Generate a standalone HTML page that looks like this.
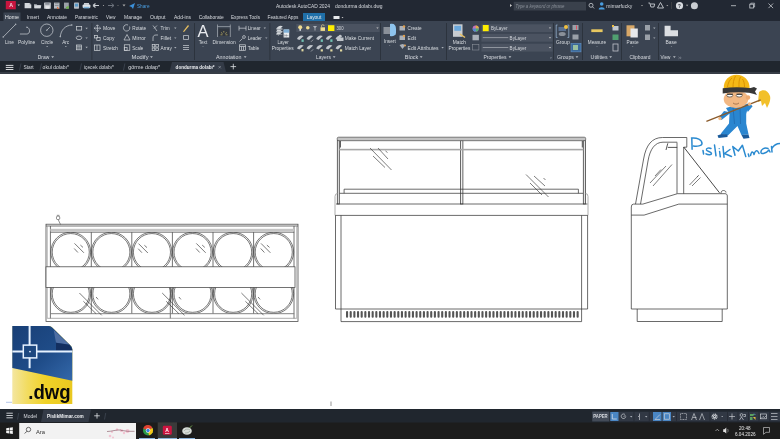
<!DOCTYPE html>
<html><head><meta charset="utf-8">
<style>
*{margin:0;padding:0}
html,body{width:780px;height:439px;overflow:hidden;background:#fff}
svg{display:block;font-family:"Liberation Sans",sans-serif;will-change:transform}

</style></head><body>
<svg width="780" height="439" viewBox="0 0 780 439">
<!-- bands -->
<rect x="0" y="0" width="780" height="21" fill="#222833"/>
<rect x="0" y="21" width="780" height="40" fill="#3b4452"/>
<rect x="0" y="61" width="780" height="11" fill="#20262e"/><rect x="0" y="72" width="780" height="2" fill="#373d46"/>
<rect x="0" y="409" width="780" height="14" fill="#20262e"/>
<rect x="0" y="422.5" width="780" height="16.5" fill="#1c1c1c"/>
<!-- title bar -->
<rect x="5.8" y="1" width="10" height="8.3" fill="#c8153f"/>
<text x="9.3" y="7" font-size="5.5" font-weight="bold" fill="#f4d0dc" textLength="3.8" lengthAdjust="spacingAndGlyphs">A</text>
<path d="M17.5 4.5h2.5l-1.25 1.5z" fill="#ccc"/>
<path d="M24.6 3.1h5l1.7 1.6v3.5h-6.7z" fill="#d4d8dd"/><path d="M29.6 3.1v1.6h1.7" fill="#9aa0a8"/>
<path d="M34 4.3h2.5l0.8 0.8h3.5v3.2h-6.8z" fill="#aeb3ba"/><path d="M34.8 5.6h6.6l-1 2.7h-5.6z" fill="#d4d8dd"/>
<rect x="44.1" y="2.6" width="6.7" height="6.1" fill="#c9cdd2"/><rect x="45.2" y="2.6" width="4.4" height="2.2" fill="#8a9099"/><rect x="45.5" y="6.2" width="4" height="2.5" fill="#e6e8eb"/>
<rect x="54" y="2.6" width="5.5" height="6" fill="#b8bdc4"/><rect x="54.8" y="3.5" width="3.8" height="0.6" fill="#6a7078"/><rect x="54.8" y="5" width="3.8" height="0.6" fill="#6a7078"/><path d="M57 6.5l2.5 2.2h-2.5z" fill="#e07040"/>
<rect x="64" y="2.6" width="4.8" height="6" fill="#9aa0a8"/><path d="M66 7l2.8-1.3v3h-2.8z" fill="#70b050"/>
<rect x="74" y="2.6" width="5" height="6.2" rx="0.7" fill="#b8bdc4"/><rect x="74.8" y="3.6" width="3.4" height="3" fill="#5a9ac8"/>
<rect x="84" y="3" width="5" height="1.8" fill="#c9cdd2"/><rect x="82.6" y="4.6" width="7.8" height="3.4" rx="1" fill="#dfe3e7"/><rect x="83.6" y="6.8" width="5.8" height="1.6" fill="#7ab0d8"/>
<path d="M93 5.5h6M93 5.5l2.5-2M93 5.5l2.5 2" stroke="#c9cdd2" stroke-width="1.2"/>
<circle cx="103.5" cy="5.5" r="0.6" fill="#aaa"/>
<path d="M108 5.5h6M114 5.5l-2.5-2M114 5.5l-2.5 2" stroke="#6c727c" stroke-width="1"/>
<circle cx="118" cy="5.5" r="0.6" fill="#777"/>
<path d="M122.5 4.5h3l-1.5 2z" fill="#aaa"/>
<path d="M129 6l6-3-2 6-1.5-2z" fill="#3b8fd9"/>
<text x="137" y="7.7" font-size="5.2" fill="#4a9de0" textLength="12.5" lengthAdjust="spacingAndGlyphs">Share</text>
<text x="276" y="7.5" font-size="5" fill="#d6d9de" textLength="54" lengthAdjust="spacingAndGlyphs">Autodesk AutoCAD 2024</text>
<text x="335" y="7.5" font-size="5" fill="#d6d9de" textLength="47.5" lengthAdjust="spacingAndGlyphs">dondurma dolabı.dwg</text>
<path d="M510 4l2 1.5-2 1.5z" fill="#ccc"/>
<rect x="513.7" y="1.8" width="72.3" height="8.7" fill="#3a414c"/>
<text x="515.5" y="7.8" font-size="4.8" font-style="italic" fill="#8a9099" textLength="49" lengthAdjust="spacingAndGlyphs">Type a keyword or phrase</text>
<circle cx="591" cy="5.3" r="2" fill="none" stroke="#c9cdd2" stroke-width="0.8"/>
<path d="M592.5 6.8l1.6 1.6" stroke="#c9cdd2" stroke-width="0.8"/>
<circle cx="601.7" cy="4" r="1.8" fill="#4a9de0"/>
<path d="M598.7 9.5c0-3 6-3 6 0z" fill="#4a9de0"/>
<text x="606.3" y="7.8" font-size="5" fill="#d6d9de" textLength="26" lengthAdjust="spacingAndGlyphs">mimarfucky</text>
<path d="M641 5h2l-1 1.2z" fill="#aaa"/>
<path d="M648.4 3h1.5l1 4h3l0.8-3h-4" stroke="#c9cdd2" stroke-width="0.9" fill="none"/>
<path d="M660.5 2.5l3 5.5h-6z" fill="none" stroke="#c9cdd2" stroke-width="0.9"/>
<path d="M666.3 5h2l-1 1.2z" fill="#aaa"/>
<rect x="671.5" y="2" width="0.5" height="7" fill="#555"/>
<circle cx="679.5" cy="5.7" r="3.6" fill="#d8dbe0"/>
<text x="678" y="7.6" font-size="4.5" font-weight="bold" fill="#232831">?</text>
<path d="M685.9 4.8h2.4l-1.2 1.4z" fill="#aaa"/>
<circle cx="694.4" cy="5.7" r="3.5" fill="#c9cdd2"/>
<path d="M731 5.7h5" stroke="#c9cdd2" stroke-width="0.8"/>
<rect x="749.8" y="4.2" width="3.8" height="3.8" fill="none" stroke="#c9cdd2" stroke-width="0.8"/>
<path d="M750.8 4.2v-1h3.8v3.8h-1" fill="none" stroke="#c9cdd2" stroke-width="0.7"/>
<path d="M768.5 3.5l4.6 4.6M773.1 3.5l-4.6 4.6" stroke="#c9cdd2" stroke-width="0.8"/>
<!-- tabs -->
<rect x="3.5" y="12.5" width="17" height="8.5" fill="#3b4452"/>
<g font-size="5" fill="#d8dbe0">
<text x="5" y="19.0" fill="#e6e8eb" textLength="14" lengthAdjust="spacingAndGlyphs">Home</text>
<text x="27" y="19.0" textLength="12" lengthAdjust="spacingAndGlyphs">Insert</text>
<text x="47" y="19.0" textLength="20" lengthAdjust="spacingAndGlyphs">Annotate</text>
<text x="75" y="19.0" textLength="23" lengthAdjust="spacingAndGlyphs">Parametric</text>
<text x="106" y="19.0" textLength="9.5" lengthAdjust="spacingAndGlyphs">View</text>
<text x="124" y="19.0" textLength="18" lengthAdjust="spacingAndGlyphs">Manage</text>
<text x="150" y="19.0" textLength="15.5" lengthAdjust="spacingAndGlyphs">Output</text>
<text x="174" y="19.0" textLength="17" lengthAdjust="spacingAndGlyphs">Add-ins</text>
<text x="198.7" y="19.0" textLength="25" lengthAdjust="spacingAndGlyphs">Collaborate</text>
<text x="231" y="19.0" textLength="29" lengthAdjust="spacingAndGlyphs">Express Tools</text>
<text x="267.5" y="19.0" textLength="31" lengthAdjust="spacingAndGlyphs">Featured Apps</text>
</g>
<rect x="303" y="13" width="22" height="8" fill="#1f6fa8"/>
<text x="306.8" y="19.0" font-size="5" fill="#e6e8eb" textLength="14.5" lengthAdjust="spacingAndGlyphs">Layout</text>
<rect x="333.5" y="16" width="6" height="3" fill="#e6e8eb"/>
<path d="M341.5 17h2l-1 1.2z" fill="#ccc"/>
<!-- ribbon separators -->
<g fill="#2a3039">
<rect x="91.5" y="23" width="0.8" height="37"/>
<rect x="194" y="23" width="0.8" height="37"/>
<rect x="269.5" y="23" width="0.8" height="37"/>
<rect x="380" y="23" width="0.8" height="37"/>
<rect x="446" y="23" width="0.8" height="37"/>
<rect x="553" y="23" width="0.8" height="37"/>
<rect x="582" y="23" width="0.8" height="37"/>
<rect x="621" y="23" width="0.8" height="37"/>
<rect x="658" y="23" width="0.8" height="37"/>

</g>
<g stroke="#cfd3d8" stroke-width="0.7" fill="none">
<!-- Draw -->
<path d="M3.2 37L15.6 24.4"/>
<path d="M19.9 34h7c3.5 0 3.5-6 0-6.8"/>
<circle cx="46.8" cy="30.2" r="6.2"/>
<path d="M46.8 30.2l3-3"/>
<path d="M60.3 36.6C61 30 65 25.5 71.8 25"/>
<rect x="76.5" y="26.5" width="5.2" height="3.6"/>
<ellipse cx="79" cy="37.8" rx="2.8" ry="1.8"/>
<rect x="76.5" y="45" width="5" height="4.8"/>
<path d="M76.5 46.5h5M76.5 48h5M78 45v4.8M79.8 45v4.8" stroke-width="0.4"/>
</g>
<g fill="#aab0b8">
<path d="M85.4 27.8h2.4l-1.2 1.4z"/><path d="M85.4 37.4h2.4l-1.2 1.4z"/><path d="M85.4 46.8h2.4l-1.2 1.4z"/>
<rect x="46.4" y="46.2" width="1.6" height="0.7"/><rect x="65" y="46.2" width="1.6" height="0.7"/><circle cx="3.2" cy="37" r="0.8"/><circle cx="15.6" cy="24.4" r="0.8"/><circle cx="60.3" cy="36.6" r="0.8"/><circle cx="71.8" cy="25" r="0.8"/><circle cx="26.9" cy="27.2" r="0.7"/><circle cx="46.8" cy="30.2" r="0.7"/>
</g>
<g font-size="5.2" fill="#d8dce0">
<text x="4.9" y="43.6" textLength="9" lengthAdjust="spacingAndGlyphs">Line</text>
<text x="18" y="43.6" textLength="17.3" lengthAdjust="spacingAndGlyphs">Polyline</text>
<text x="41" y="43.6" textLength="12.2" lengthAdjust="spacingAndGlyphs">Circle</text>
<text x="62.2" y="43.6" textLength="7" lengthAdjust="spacingAndGlyphs">Arc</text>
</g>
<!-- panel labels -->
<g font-size="5" fill="#d8dbe0">
<text x="37.8" y="59" textLength="11.5" lengthAdjust="spacingAndGlyphs">Draw</text>
<text x="131.6" y="59" textLength="17" lengthAdjust="spacingAndGlyphs">Modify</text>
<text x="216" y="59" textLength="25.5" lengthAdjust="spacingAndGlyphs">Annotation</text>
<text x="316" y="59" textLength="15" lengthAdjust="spacingAndGlyphs">Layers</text>
<text x="404.8" y="59" textLength="13.5" lengthAdjust="spacingAndGlyphs">Block</text>
<text x="483.5" y="59" textLength="23" lengthAdjust="spacingAndGlyphs">Properties</text>
<text x="556.9" y="59" textLength="17" lengthAdjust="spacingAndGlyphs">Groups</text>
<text x="590.6" y="59" textLength="17" lengthAdjust="spacingAndGlyphs">Utilities</text>
<text x="629.4" y="59" textLength="21" lengthAdjust="spacingAndGlyphs">Clipboard</text>
<text x="660.4" y="59" textLength="10" lengthAdjust="spacingAndGlyphs">View</text>
</g>
<g fill="#b8bdc4">
<path d="M51.25 56.3h2.8l-1.4 1.7z"/>
<path d="M150.05 56.3h2.8l-1.4 1.7z"/>
<path d="M243.75 56.3h2.8l-1.4 1.7z"/>
<path d="M332.75 56.3h2.8l-1.4 1.7z"/>
<path d="M419.75 56.3h2.8l-1.4 1.7z"/>
<path d="M508.55 56.3h2.8l-1.4 1.7z"/>
<path d="M575.55 56.3h2.8l-1.4 1.7z"/>
<path d="M609.25 56.3h2.8l-1.4 1.7z"/>
<path d="M672.95 56.3h2.8l-1.4 1.7z"/>
<path d="M678.5 56.8l1.2 1-1.2 1M680 56.8l1.2 1-1.2 1" stroke="#b8bdc4" stroke-width="0.4" fill="none"/>
<path d="M550 58.2l1.3 0v-1.3z"/>
</g>
<!-- Modify -->
<g stroke="#cfd3d8" stroke-width="0.7" fill="none">
<path d="M97.4 25v6.5M94.2 28.2h6.4M96.2 26l1.2-1.2 1.2 1.2M96.2 30.4l1.2 1.2 1.2-1.2M95.4 27l-1.2 1.2 1.2 1.2M99.4 27l1.2 1.2-1.2 1.2"/>
<rect x="94.5" y="35.5" width="3" height="2.5"/><rect x="96.8" y="37.5" width="3.3" height="3"/>
<rect x="94.5" y="45" width="5.5" height="5.5"/><path d="M97 45v5.5"/>
<path d="M129.5 26.5a3.2 3.2 0 1 1-1.5-1.5"/>
<path d="M127 34.5l3 5.5h-6z"/>
<rect x="124.3" y="44.8" width="5.5" height="5.5"/><rect x="124.3" y="47.5" width="2.8" height="2.8"/>
<path d="M153 25.5l4 5.5M157 25.5l-3 3"/>
<path d="M153 41v-3c0-2 1-3 3-3h2"/>
<rect x="152.2" y="44.5" width="2.6" height="2.5"/><rect x="155.8" y="44.5" width="2.6" height="2.5"/><rect x="152.2" y="48" width="2.6" height="2.5"/><rect x="155.8" y="48" width="2.6" height="2.5"/>
<path d="M183.5 39.5h5v-4h-5z"/>
<path d="M183 45.5h6M183 47.5h6M183 49.5h6"/>
</g>
<path d="M183 31.5l5-6.5 1 1-5 6z" fill="#e8c060"/>
<g font-size="5.2" fill="#d8dce0">
<text x="103" y="30" textLength="12.4" lengthAdjust="spacingAndGlyphs">Move</text>
<text x="103" y="39.8" textLength="11.6" lengthAdjust="spacingAndGlyphs">Copy</text>
<text x="103" y="49.5" textLength="15" lengthAdjust="spacingAndGlyphs">Stretch</text>
<text x="132.3" y="30" textLength="13.8" lengthAdjust="spacingAndGlyphs">Rotate</text>
<text x="132.3" y="39.8" textLength="13.4" lengthAdjust="spacingAndGlyphs">Mirror</text>
<text x="132.3" y="49.5" textLength="11" lengthAdjust="spacingAndGlyphs">Scale</text>
<text x="160.5" y="30" textLength="9.2" lengthAdjust="spacingAndGlyphs">Trim</text>
<text x="160.5" y="39.8" textLength="10.6" lengthAdjust="spacingAndGlyphs">Fillet</text>
<text x="160.5" y="49.5" textLength="11.3" lengthAdjust="spacingAndGlyphs">Array</text>
</g>
<g fill="#aab0b8">
<path d="M174.1 27.6h2.4l-1.2 1.4z"/><path d="M174.1 37.4h2.4l-1.2 1.4z"/><path d="M174.1 47.0h2.4l-1.2 1.4z"/>
</g>
<!-- Annotation -->
<text x="197.5" y="37" font-size="16" fill="#e8eaee" textLength="11" lengthAdjust="spacingAndGlyphs">A</text>
<text x="198.7" y="44.1" font-size="5.2" fill="#d8dce0" textLength="8.5" lengthAdjust="spacingAndGlyphs">Text</text>
<circle cx="203" cy="46.5" r="0.45" fill="#aab0b8"/>
<g stroke="#cfd3d8" stroke-width="0.7" fill="none">
<path d="M217.5 24.5v12.5M230.3 24.5v12.5M217.5 26.6h12.8" stroke="#aab0b8"/>
<path d="M239 25.8v4.8M246 25.8v4.8M239 28.2h7"/>
<path d="M239.5 41.5l3-3"/><circle cx="244" cy="37" r="1.4"/>
<rect x="239.5" y="44.8" width="6" height="5.5"/><path d="M239.5 46.5h6M241.5 46.5v3.8M243.5 46.5v3.8"/>
</g>
<rect x="218.6" y="28.5" width="10.8" height="7.5" fill="#30363f"/><path d="M221 32.5l1.5 1M223.8 31v1.5M226.8 32.5l-1.5 1M220.5 34.8h2M225.5 34.8h2" stroke="#e0d070" stroke-width="0.6"/>
<g font-size="5.2" fill="#d8dce0">
<text x="212.6" y="44.1" textLength="23.2" lengthAdjust="spacingAndGlyphs">Dimension</text>
<text x="247.8" y="30" textLength="12.7" lengthAdjust="spacingAndGlyphs">Linear</text>
<text x="247.8" y="39.8" textLength="14" lengthAdjust="spacingAndGlyphs">Leader</text>
<text x="247.8" y="49.5" textLength="11.3" lengthAdjust="spacingAndGlyphs">Table</text>
</g>
<g fill="#aab0b8"><path d="M263.6 27.6h2.4l-1.2 1.4z"/><path d="M265.1 37.4h2.4l-1.2 1.4z"/></g>
<!-- Layers -->
<g fill="#d4d8dc">
<path d="M276.2 29.1C277.2 26.3 280.2 24.8 282.8 26.2L278.6 30.2z"/>
<path d="M276.2 31.7C277.2 28.9 280.2 27.4 282.8 28.8L278.6 32.8z"/>
<path d="M276.2 34.3C277.2 31.5 280.2 30.0 282.8 31.4L278.6 35.4z"/>
</g>
<g fill="#8a9099"><path d="M276.2 28.8L282.4 29.1v0.8l-6.2-0.3z"/><path d="M276.2 31.4L282.4 31.7v0.8l-6.2-0.3z"/><path d="M276.2 34L282.4 34.3v0.8l-6.2-0.3z"/></g>
<rect x="283.6" y="29.5" width="5.6" height="8" fill="#e8ecef"/>
<rect x="283.6" y="29.5" width="5.6" height="3.2" fill="#7fb0d8"/>
<path d="M284.8 34.2v2.5M286.4 34.2v2.5M284.5 35.5h4" stroke="#6a7078" stroke-width="0.4"/>
<g font-size="5.2" fill="#d8dce0">
<text x="277.4" y="44" textLength="11.3" lengthAdjust="spacingAndGlyphs">Layer</text>
<text x="271.8" y="49.7" textLength="21.9" lengthAdjust="spacingAndGlyphs">Properties</text>
</g>
<rect x="296.3" y="24" width="83.3" height="8" fill="#4b5361"/>
<g fill="#f0dc90"><circle cx="300.2" cy="27.3" r="2"/><circle cx="307.8" cy="27.7" r="1.8"/><rect x="320.5" y="27.3" width="4.5" height="3.6"/></g><rect x="299.4" y="29" width="1.6" height="1.8" fill="#d8dce0"/><path d="M321.5 27.3v-1.3a1.3 1.3 0 0 1 2.6 0" stroke="#f0dc90" stroke-width="0.6" fill="none"/>
<path d="M313 26h4l-1.5 2v2.5h-1v-2.5z" fill="#aab0b8"/>
<rect x="328" y="25.2" width="6.4" height="5.8" fill="#ffee00"/>
<text x="336.5" y="30.3" font-size="5" fill="#d6d9de" textLength="7.1" lengthAdjust="spacingAndGlyphs">300</text>
<path d="M376.3 27.4h2.4l-1.2 1.4z" fill="#ccc"/>
<g fill="#c0c5cb"><path d="M297.0 38.9C298.0 36.1 301.0 34.6 303.6 36.0L299.4 40.0z"/><path d="M306.6 38.9C307.6 36.1 310.6 34.6 313.2 36.0L309.0 40.0z"/><path d="M316.2 38.9C317.2 36.1 320.2 34.6 322.8 36.0L318.6 40.0z"/><path d="M325.8 38.9C326.8 36.1 329.8 34.6 332.4 36.0L328.2 40.0z"/><path d="M335.6 38.9C336.6 36.1 339.6 34.6 342.2 36.0L338.0 40.0z"/><path d="M297.0 48.5C298.0 45.7 301.0 44.2 303.6 45.6L299.4 49.6z"/><path d="M306.6 48.5C307.6 45.7 310.6 44.2 313.2 45.6L309.0 49.6z"/><path d="M316.2 48.5C317.2 45.7 320.2 44.2 322.8 45.6L318.6 49.6z"/><path d="M325.8 48.5C326.8 45.7 329.8 44.2 332.4 45.6L328.2 49.6z"/><path d="M335.6 48.5C336.6 45.7 339.6 44.2 342.2 45.6L338.0 49.6z"/></g><g fill="#70bfb2"><rect x="301.5" y="39.3" width="2.2" height="2.6"/><rect x="320.7" y="39.3" width="2.2" height="2.6"/><rect x="330.3" y="39.3" width="2.2" height="2.6"/></g><path d="M311 41.8l2.2-2.2M340 41l2-1.5" stroke="#d0d4d8" stroke-width="0.6"/><rect x="337" y="37.5" width="6.5" height="3.5" fill="#c0c5cb"/><circle cx="340.2" cy="36" r="1.3" fill="#c0c5cb"/><g fill="#e0d8a0"><rect x="301.5" y="49" width="2" height="2.4"/><rect x="320.7" y="49.3" width="2.2" height="2.2"/><rect x="330.3" y="49.3" width="2.2" height="2.2"/><rect x="340" y="49.3" width="2.2" height="2.2"/></g><path d="M311 51.5l2.2-2.2" stroke="#d0d4d8" stroke-width="0.6"/>
<g font-size="5.2" fill="#d8dce0">
<text x="344.7" y="39.8" textLength="29.3" lengthAdjust="spacingAndGlyphs">Make Current</text>
<text x="344.7" y="49.5" textLength="26.5" lengthAdjust="spacingAndGlyphs">Match Layer</text>
</g>
<!-- Block -->
<rect x="383.5" y="27" width="8.5" height="7" fill="#8a9099"/>
<path d="M390 24c4-1 6 1 6 5v4c0 2-3 4-6 3z" fill="#8ec4ee"/>
<text x="383.8" y="43" font-size="5.2" fill="#d8dce0" textLength="12" lengthAdjust="spacingAndGlyphs">Insert</text>
<circle cx="389.8" cy="45.5" r="0.45" fill="#aab0b8"/>
<g fill="#aab0b8">
<rect x="399.5" y="26" width="5.5" height="4.5"/><rect x="399.5" y="35.5" width="5.5" height="4.5"/>
<path d="M399.5 45l3 4 3-4-3-1z"/>
</g>
<g fill="#e0a050"><circle cx="404" cy="26.5" r="1.2"/><circle cx="404" cy="36" r="1.2"/><circle cx="405" cy="45.5" r="1"/></g>
<g font-size="5.2" fill="#d8dce0">
<text x="407.6" y="30" textLength="14" lengthAdjust="spacingAndGlyphs">Create</text>
<text x="407.6" y="39.8" textLength="8.5" lengthAdjust="spacingAndGlyphs">Edit</text>
<text x="407.6" y="49.5" textLength="31" lengthAdjust="spacingAndGlyphs">Edit Attributes</text>
</g>
<path d="M441.4 47.0h2.4l-1.2 1.4z" fill="#aab0b8"/>
<!-- Properties -->
<rect x="453" y="24.3" width="9.5" height="12.5" fill="#c9cdd2"/>
<rect x="454.3" y="25.8" width="6.8" height="5" fill="#6aa8dc"/>
<path d="M460 34l5 3.5" stroke="#e8c060" stroke-width="1.5"/>
<g font-size="5.2" fill="#d8dce0">
<text x="452.8" y="44" textLength="13.2" lengthAdjust="spacingAndGlyphs">Match</text>
<text x="448.5" y="49.7" textLength="21.9" lengthAdjust="spacingAndGlyphs">Properties</text>
</g>
<circle cx="475.7" cy="28.5" r="3.1" fill="#c070c0"/>
<path d="M475.7 28.5v-3.1a3.1 3.1 0 0 1 3.1 3.1z" fill="#e0b040"/>
<path d="M475.7 28.5h3.1a3.1 3.1 0 0 1-3.1 3.1z" fill="#50b070"/>
<path d="M475.7 28.5v3.1a3.1 3.1 0 0 1-3.1-3.1z" fill="#4a8fd0"/>
<rect x="472.5" y="34.8" width="6.4" height="5.5" fill="#aab0b8"/>
<rect x="472.5" y="44.5" width="6.4" height="5.5" fill="none" stroke="#8a9099" stroke-width="0.6"/>
<g fill="#4b5361">
<rect x="481.4" y="24.3" width="71.2" height="7.8"/>
<rect x="481.4" y="33.8" width="71.2" height="7.9"/>
<rect x="481.4" y="43.7" width="71.2" height="7.9"/>
</g>
<rect x="482.8" y="25" width="5.9" height="6.2" fill="#ffee00"/>
<path d="M482.8 37.6h25.5M482.8 47.5h25.5" stroke="#d4d8dd" stroke-width="0.5"/>
<g font-size="5" fill="#d6d9de">
<text x="491" y="30.2" textLength="16.5" lengthAdjust="spacingAndGlyphs">ByLayer</text>
<text x="509.6" y="39.8" textLength="16.7" lengthAdjust="spacingAndGlyphs">ByLayer</text>
<text x="509.6" y="49.6" textLength="16.7" lengthAdjust="spacingAndGlyphs">ByLayer</text>
</g>
<g fill="#ccc"><path d="M548.8 27.4h2.4l-1.2 1.4z"/><path d="M548.8 37.2h2.4l-1.2 1.4z"/><path d="M548.8 46.9h2.4l-1.2 1.4z"/></g>
<!-- Groups -->
<path d="M557.5 25h-1.3v12.5h1.3M567.5 25h1.3v12.5h-1.3" stroke="#a0c0e0" stroke-width="0.7" fill="none"/>
<rect x="558.5" y="27" width="7.5" height="4" fill="#5a7090"/>
<ellipse cx="562.2" cy="34" rx="3.5" ry="2" fill="#8a9099"/>
<circle cx="566" cy="27" r="2" fill="#f0c040"/>
<text x="556" y="44" font-size="5.2" fill="#d8dce0" textLength="13.6" lengthAdjust="spacingAndGlyphs">Group</text>
<rect x="572.5" y="25" width="6" height="5" fill="#9aa0a8"/><rect x="576" y="25.5" width="1" height="4" fill="#e05060"/>
<rect x="572.5" y="34.5" width="6" height="5" fill="#9aa0a8"/>
<rect x="571" y="43.4" width="10" height="8.5" fill="#3c6a9a" stroke="#6a9ad0" stroke-width="0.5"/>
<rect x="573" y="45" width="5" height="5" fill="#9ac0a0"/>
<!-- Utilities -->
<rect x="591.3" y="29.3" width="11.3" height="2.8" fill="#e8c860"/>
<text x="587.8" y="44" font-size="5.2" fill="#d8dce0" textLength="18.2" lengthAdjust="spacingAndGlyphs">Measure</text>
<circle cx="597" cy="46.5" r="0.45" fill="#aab0b8"/>
<rect x="612.5" y="26" width="6" height="4.5" fill="#c0c8d0"/><rect x="612" y="25" width="2" height="2" fill="#f0c040"/>
<rect x="612.5" y="34.5" width="6" height="5.5" fill="#50a070"/>
<rect x="613" y="44" width="5" height="7" fill="none" stroke="#c0c4ca" stroke-width="0.8"/>
<!-- Clipboard -->
<rect x="626.5" y="25.3" width="8" height="11" fill="#d8a868"/>
<rect x="630.5" y="28.5" width="7.3" height="9" fill="#e6e8eb"/>
<text x="626.5" y="44" font-size="5.2" fill="#d8dce0" textLength="12" lengthAdjust="spacingAndGlyphs">Paste</text>
<circle cx="632.8" cy="46.5" r="0.45" fill="#aab0b8"/>
<rect x="645" y="25" width="5" height="5.5" fill="#9aa0a8"/>
<rect x="645" y="34.5" width="5" height="5.5" fill="#9aa0a8"/>
<g fill="#aab0b8"><path d="M653.1 27.6h2.4l-1.2 1.4z"/><path d="M653.1 37.4h2.4l-1.2 1.4z"/></g>
<!-- View -->
<path d="M664.6 25.8h6v4.5h7.4v6h-13.4z" fill="#dcdfe3"/>
<text x="665.5" y="44" font-size="5.2" fill="#d8dce0" textLength="11.3" lengthAdjust="spacingAndGlyphs">Base</text>
<circle cx="671.3" cy="46.5" r="0.45" fill="#aab0b8"/>
<!-- file tabs -->
<path d="M6.2 65.4h6.8M6.2 67.45h6.8M6.2 69.5h6.8" stroke="#eceef0" stroke-width="0.9" stroke-linecap="round"/>
<g stroke="#4a5260" stroke-width="0.6">
<path d="M19.5 70.5l1.5-7M40 70.5l1.5-7M80 70.5l1.5-7M123.4 70.5l1.5-7"/>
</g>
<path d="M169.5 72l2.5-10h51.5l2.5 10z" fill="#333a46"/>
<g font-size="5" fill="#d8dbe0">
<text x="23.4" y="69" textLength="10.3" lengthAdjust="spacingAndGlyphs">Start</text>
<text x="42.6" y="69" textLength="26.3" lengthAdjust="spacingAndGlyphs">okul dolabı*</text>
<text x="84" y="69" textLength="29.8" lengthAdjust="spacingAndGlyphs">içecek dolabı*</text>
<text x="128.2" y="69" textLength="32" lengthAdjust="spacingAndGlyphs">görme dolap*</text>
<text x="175.6" y="69" fill="#eceef1" font-weight="bold" textLength="39" lengthAdjust="spacingAndGlyphs">dondurma dolabı*</text>
</g>
<path d="M218.5 66l2.4 2.4M220.9 66l-2.4 2.4" stroke="#aab0b8" stroke-width="0.5"/>
<path d="M233.3 63.8v5.6M230.5 66.6h5.6" stroke="#e0e3e7" stroke-width="0.8"/>
<!-- LEFT DRAWING -->
<g stroke="#252525" stroke-width="0.62" fill="none"><circle cx="70.75" cy="252.1" r="19.9"/><circle cx="70.75" cy="252.1" r="18.55"/><circle cx="111.35" cy="252.1" r="19.9"/><circle cx="111.35" cy="252.1" r="18.55"/><circle cx="151.95" cy="252.1" r="19.9"/><circle cx="151.95" cy="252.1" r="18.55"/><circle cx="192.55" cy="252.1" r="19.9"/><circle cx="192.55" cy="252.1" r="18.55"/><circle cx="233.15" cy="252.1" r="19.9"/><circle cx="233.15" cy="252.1" r="18.55"/><circle cx="273.75" cy="252.1" r="19.9"/><circle cx="273.75" cy="252.1" r="18.55"/><circle cx="70.75" cy="293.8" r="19.9"/><circle cx="70.75" cy="293.8" r="18.55"/><circle cx="111.35" cy="293.8" r="19.9"/><circle cx="111.35" cy="293.8" r="18.55"/><circle cx="151.95" cy="293.8" r="19.9"/><circle cx="151.95" cy="293.8" r="18.55"/><circle cx="192.55" cy="293.8" r="19.9"/><circle cx="192.55" cy="293.8" r="18.55"/><circle cx="233.15" cy="293.8" r="19.9"/><circle cx="233.15" cy="293.8" r="18.55"/><circle cx="273.75" cy="293.8" r="19.9"/><circle cx="273.75" cy="293.8" r="18.55"/></g>
<rect x="50.8" y="224" width="243" height="8" fill="#fff"/>
<rect x="50.8" y="313.8" width="243" height="5" fill="#fff"/>
<g stroke="#444" stroke-width="0.75" fill="none">
<rect x="46" y="224.2" width="252" height="97.3"/>
<path d="M46 226H298M50.4 232.2H294.2"/>
<path d="M50.4 226V318.5M294 226V318.5"/>
<path d="M91.3 232.2V313.6M131.8 232.2V313.6M172.4 232.2V313.6M213 232.2V313.6M253.6 232.2V313.6"/>
<path d="M170.3 287.4V318.5"/>
</g>
<path d="M47.4 226V318.5M296.6 226V318.5" stroke="#999" stroke-width="0.6"/><path d="M50.4 313.7H294.2" stroke="#777" stroke-width="0.9"/><path d="M47.4 318.3H296.6" stroke="#888" stroke-width="0.7"/>
<rect x="50.4" y="228.8" width="243.6" height="2.7" fill="#c4c4c4"/>
<rect x="46" y="266.8" width="249" height="20.6" fill="#fff" stroke="#444" stroke-width="0.75"/>
<g stroke="#333" stroke-width="0.65"><path d="M74.5 243.4l9.4 9.4M74.2 248.5l3.7 4M80.4 245.1l2.6 2.3M138.5 243.6l9.4 9.4M138.2 248.7l3.7 4M144.4 245.3l2.6 2.3M196.3 243.4l9.4 9.4M196.0 248.5l3.7 4M202.2 245.1l2.6 2.3M261 243.4l9.4 9.4M260.7 248.5l3.7 4M266.9 245.1l2.6 2.3"/><path d="M79.4 293L101.7 315.3M83.4 301.3L96.1 313.7M96.1 297l2 2.4M162.2 293L184.5 315.3M166.2 301.3L178.9 313.7M178.9 297l2 2.4M241.4 293L263.7 315.3M245.4 301.3L258.1 313.7M258.1 297l2 2.4"/></g>
<path d="M60.5 224.5L58.2 219.6" stroke="#444" stroke-width="0.6"/><rect x="56.5" y="216.2" width="3.2" height="3.3" rx="1" fill="none" stroke="#555" stroke-width="0.7"/><rect x="56.8" y="214.8" width="2.6" height="1.2" fill="#999"/>
<!-- MIDDLE DRAWING -->
<g stroke="#383838" stroke-width="0.75" fill="none">
<rect x="337.3" y="140.5" width="2" height="63.5" fill="#e4e4e4"/>
<rect x="583.3" y="140.5" width="2.3" height="63.5" fill="#e4e4e4"/>
<rect x="460.6" y="140.5" width="2.3" height="63.5" fill="#f0f0f0"/>
<rect x="337.2" y="137.2" width="248.5" height="3.5" rx="1.4" fill="#c4c4c4" stroke="#555"/>
<path d="M340.4 141V147.5M582.3 141V147.5" stroke-width="0.9"/>
</g>
<rect x="339.3" y="148.8" width="244" height="1.6" fill="#a8a8a8"/>
<g stroke="#383838" stroke-width="0.75" fill="none">
<path d="M344.1 193.3V189.2H578.4V193.3M339.6 193.3H583"/>
<path d="M336 204H587.5M335 215.4H588"/>


<path d="M335.5 215.4V309M341 215.4V321.6M581.6 215.4V321.6M587.6 215.4V309"/>
<path d="M335.5 309H587.6M341 321.6H581.6"/>
</g>
<g stroke="#383838" stroke-width="0.65">
<path d="M370 148l21.5 22M373 156l12 11.5M378 148l10 11M385.5 151l2 1.5"/>
<path d="M526 174.5l22.5 22.5M530 183l12 12M534 176l11 10M543.5 178l2 2"/>
</g>
<g fill="#555"><rect x="346.00" y="311" width="2.1" height="6.8" rx="1"/><rect x="349.66" y="311" width="2.1" height="6.8" rx="1"/><rect x="353.32" y="311" width="2.1" height="6.8" rx="1"/><rect x="356.98" y="311" width="2.1" height="6.8" rx="1"/><rect x="360.64" y="311" width="2.1" height="6.8" rx="1"/><rect x="364.30" y="311" width="2.1" height="6.8" rx="1"/><rect x="367.96" y="311" width="2.1" height="6.8" rx="1"/><rect x="371.62" y="311" width="2.1" height="6.8" rx="1"/><rect x="375.28" y="311" width="2.1" height="6.8" rx="1"/><rect x="378.94" y="311" width="2.1" height="6.8" rx="1"/><rect x="382.60" y="311" width="2.1" height="6.8" rx="1"/><rect x="386.26" y="311" width="2.1" height="6.8" rx="1"/><rect x="389.92" y="311" width="2.1" height="6.8" rx="1"/><rect x="393.58" y="311" width="2.1" height="6.8" rx="1"/><rect x="397.24" y="311" width="2.1" height="6.8" rx="1"/><rect x="400.90" y="311" width="2.1" height="6.8" rx="1"/><rect x="404.56" y="311" width="2.1" height="6.8" rx="1"/><rect x="408.22" y="311" width="2.1" height="6.8" rx="1"/><rect x="411.88" y="311" width="2.1" height="6.8" rx="1"/><rect x="415.54" y="311" width="2.1" height="6.8" rx="1"/><rect x="419.20" y="311" width="2.1" height="6.8" rx="1"/><rect x="422.86" y="311" width="2.1" height="6.8" rx="1"/><rect x="426.52" y="311" width="2.1" height="6.8" rx="1"/><rect x="430.18" y="311" width="2.1" height="6.8" rx="1"/><rect x="433.84" y="311" width="2.1" height="6.8" rx="1"/><rect x="437.50" y="311" width="2.1" height="6.8" rx="1"/><rect x="441.16" y="311" width="2.1" height="6.8" rx="1"/><rect x="444.82" y="311" width="2.1" height="6.8" rx="1"/><rect x="448.48" y="311" width="2.1" height="6.8" rx="1"/><rect x="452.14" y="311" width="2.1" height="6.8" rx="1"/><rect x="455.80" y="311" width="2.1" height="6.8" rx="1"/><rect x="459.46" y="311" width="2.1" height="6.8" rx="1"/><rect x="463.12" y="311" width="2.1" height="6.8" rx="1"/><rect x="466.78" y="311" width="2.1" height="6.8" rx="1"/><rect x="470.44" y="311" width="2.1" height="6.8" rx="1"/><rect x="474.10" y="311" width="2.1" height="6.8" rx="1"/><rect x="477.76" y="311" width="2.1" height="6.8" rx="1"/><rect x="481.42" y="311" width="2.1" height="6.8" rx="1"/><rect x="485.08" y="311" width="2.1" height="6.8" rx="1"/><rect x="488.74" y="311" width="2.1" height="6.8" rx="1"/><rect x="492.40" y="311" width="2.1" height="6.8" rx="1"/><rect x="496.06" y="311" width="2.1" height="6.8" rx="1"/><rect x="499.72" y="311" width="2.1" height="6.8" rx="1"/><rect x="503.38" y="311" width="2.1" height="6.8" rx="1"/><rect x="507.04" y="311" width="2.1" height="6.8" rx="1"/><rect x="510.70" y="311" width="2.1" height="6.8" rx="1"/><rect x="514.36" y="311" width="2.1" height="6.8" rx="1"/><rect x="518.02" y="311" width="2.1" height="6.8" rx="1"/><rect x="521.68" y="311" width="2.1" height="6.8" rx="1"/><rect x="525.34" y="311" width="2.1" height="6.8" rx="1"/><rect x="529.00" y="311" width="2.1" height="6.8" rx="1"/><rect x="532.66" y="311" width="2.1" height="6.8" rx="1"/><rect x="536.32" y="311" width="2.1" height="6.8" rx="1"/><rect x="539.98" y="311" width="2.1" height="6.8" rx="1"/><rect x="543.64" y="311" width="2.1" height="6.8" rx="1"/><rect x="547.30" y="311" width="2.1" height="6.8" rx="1"/><rect x="550.96" y="311" width="2.1" height="6.8" rx="1"/><rect x="554.62" y="311" width="2.1" height="6.8" rx="1"/><rect x="558.28" y="311" width="2.1" height="6.8" rx="1"/><rect x="561.94" y="311" width="2.1" height="6.8" rx="1"/><rect x="565.60" y="311" width="2.1" height="6.8" rx="1"/><rect x="569.26" y="311" width="2.1" height="6.8" rx="1"/><rect x="572.92" y="311" width="2.1" height="6.8" rx="1"/><rect x="576.58" y="311" width="2.1" height="6.8" rx="1"/></g>
<!-- RIGHT DRAWING (side) -->
<g stroke="#383838" stroke-width="0.75" fill="none">
<path d="M635.5 204.1L643.6 159C646 145 652 137.5 662.5 137.5H686.8V147.2H683.7"/>
<path d="M640.5 204.1L648 161C650 149 655 142.2 663 142.2H677.2"/>
<path d="M677 142.5V193.7M683.7 147V193.7"/>
<path d="M666 150L667.8 143.3M667.8 147.4H677.2" stroke-width="0.85"/>
<path d="M633.5 204.1Q631.3 204.1 631.3 207V309H727.3V196C727.3 194.5 726.5 193.7 725 193.7H677.4L642.8 204.1z"/>
<path d="M631.3 215.1H644.1L678.8 204.1H727.3"/>
<path d="M637.2 309V321.5H722.2V309"/>
<path d="M721 193.5c0-2 1-3 2.5-3s2.5 1 2.5 2"/>
</g>
<path d="M335 215.4V196.5Q335 193.5 337.5 193.5M588 215.4V196.5Q588 193.5 585.5 193.5" stroke="#9a9a9a" stroke-width="0.8" fill="none"/>
<path d="M683.7 147L719.5 192.8" stroke="#333" stroke-width="0.9"/>
<g stroke="#383838" stroke-width="0.65">
<path d="M650 183l16-17M653 186l19-21.5M655 176l6-6.5"/>
<path d="M689.5 185l9-9.5M692 186l8.5-8.5M697 177l1.5-1.5"/>
</g>
<path d="M331 401.5V406" stroke="#505050" stroke-width="0.6"/>
<!-- MASCOT -->
<path d="M724 111L719 117.4L721.5 120L731 112.5z" fill="#2a86d0"/>
<path d="M744.6 104.7L749.4 103.1L752.6 106.3L747.8 112z" fill="#2a86d0"/>
<path d="M726 107.9L734.3 105.5L746.2 103.9L747.8 108L746.2 114L746.2 123.5L748.6 134.5L741.4 135L737.5 126L727.9 135.5L720.7 133.8L729 123.5L729.5 114z" fill="#2a86d0"/>
<path d="M733 107l1.5 17M740 106l0.5 18" stroke="#1a5a9a" stroke-width="0.5"/>
<path d="M717.5 135.5l4-1.5 6 0.5 0 2.5-9 1z" fill="#1a5a9a"/>
<path d="M741.5 135l7-0.5 1 3.5-6 0.8z" fill="#1a5a9a"/>
<path d="M759 92c4-3 9-2 11 4c1 4-1 8-3 12l-2-5l-3 3l-1-5l-3 1z" fill="#f2c02a"/>
<path d="M706.4 121.4L760.6 99.9" stroke="#8a5a2a" stroke-width="1.3"/>
<circle cx="720" cy="118.5" r="1.7" fill="#f2b884"/>
<circle cx="749.5" cy="104" r="1.7" fill="#f2b884"/>
<path d="M723.7 88.5C723.5 80 729 74.7 736.5 74.7C744 74.7 749.8 80 749.6 88.5z" fill="#f4b816"/>
<path d="M727.5 87c0.5-4 2-7 4.5-9M733 87.5c0-4 0.5-8 2.5-11.5M739 87.5c0-4-0.3-7.5 1.5-10.5M744.5 87c0-3-0.5-6-2-8" stroke="#d88e00" stroke-width="0.9" fill="none"/>
<ellipse cx="736" cy="99" rx="12.3" ry="8.9" fill="#f2b884"/><circle cx="748" cy="97.5" r="2.2" fill="#eeaa70"/>
<path d="M722.7 88.3Q736.5 86 751.4 88.3V93Q736.5 91.5 722.7 93.4z" fill="#383838"/>
<path d="M749 88.5l5-1.5 3 1.5-2 3 2 3.5-3-1-4-1z" fill="#383838"/>
<ellipse cx="729.8" cy="95.6" rx="3" ry="1.4" fill="#fff" stroke="#2a2a2a" stroke-width="0.6"/><ellipse cx="739.2" cy="95.6" rx="3" ry="1.4" fill="#fff" stroke="#2a2a2a" stroke-width="0.6"/><path d="M727 94.2h6M736.5 94.2h6" stroke="#2a2a2a" stroke-width="1"/>
<path d="M733 103c2 1.5 4 1.5 6 0" stroke="#7a4a2a" stroke-width="0.6" fill="none"/>
<g stroke="#2a8ad0" stroke-width="1.5" fill="none" stroke-linecap="round" stroke-linejoin="round">
<path d="M691.8 138.2L692.1 149.3M691.5 138C697 137.5 702 139.5 702 143.5C702 146 697 146.5 693.5 146"/>
<path d="M703 150.5L703.6 154"/>
<path d="M711 148.5C709 147.5 706 148 706.5 150C707 151.5 711.5 151.5 711.5 153.5C711.5 155 708 155 706 153.8"/>
<path d="M714.5 145L716 155.8"/>
<path d="M719.6 151.5L720.3 156.8"/>
<path d="M723 146.5L724 157.3M730 149.5L724.5 153.5L731.5 156.5"/>
<path d="M732.8 146.5L735 155.2M732.8 146.5L738.3 151L742.4 145.3L745.8 156.6"/>
<path d="M748.3 154L749 156.6"/>
<path d="M750.5 155.5C751.5 151 753 151 754 154.5C755 150.5 757 149.5 758.5 152.5L759 153.5"/>
<path d="M768 148.5C764 147 760.5 150 761 152.5C761.5 154.5 766 153.5 769 150L770 152"/>
<path d="M772 152L771.5 146.5M771.8 148.5C774 145 777 143.5 780 143.5"/>
</g>
<g fill="#2a8ad0"><circle cx="719.2" cy="148.6" r="0.7"/></g>
<!-- DWG ICON -->
<defs>
<linearGradient id="bl" x1="0" y1="0" x2="1" y2="1"><stop offset="0" stop-color="#183f76"/><stop offset="0.55" stop-color="#1f4c88"/><stop offset="1" stop-color="#3468aa"/></linearGradient>
<linearGradient id="yl" x1="0" y1="0" x2="1" y2="0"><stop offset="0" stop-color="#f4e6a0"/><stop offset="0.25" stop-color="#f2dc60"/><stop offset="0.55" stop-color="#f0d228"/><stop offset="1" stop-color="#e9c820"/></linearGradient>
</defs>
<path d="M12.3 326H49Q51 326 52.5 327.8L71.3 346.3Q72.3 347.5 72.3 349.5V404H12.3z" fill="url(#yl)"/>
<path d="M12.3 326H49Q51 326 52.5 327.8L71.3 346.3Q72.3 347.5 72.3 349.5V380.7L12.3 368z" fill="url(#bl)"/>
<path d="M53.7 330L56 342.8L69.5 344.8z" fill="#4e6ea2"/>
<path d="M56 342.8L69.5 344.8L72.3 349.5V350.5H56z" fill="#132f60"/>
<g fill="#e6f2ff">
<rect x="28.6" y="326" width="2" height="42.2"/>
<rect x="12.3" y="350.5" width="60" height="2"/>
</g>
<rect x="23.3" y="345.1" width="13.4" height="12.8" fill="#1d4880" stroke="#e6f2ff" stroke-width="1.5"/>
<circle cx="30" cy="351.6" r="0.9" fill="#e6f2ff"/>
<text x="28.3" y="398.6" font-size="20" font-weight="bold" fill="#0a0a0a" textLength="42.3" lengthAdjust="spacingAndGlyphs">.dwg</text>
<path d="M6 402.3h6" stroke="#6a8ad0" stroke-width="0.5"/>
<!-- STATUS BAR -->
<path d="M6.4 413.2h6.4M6.4 415.5h6.4M6.4 417.8h6.4" stroke="#d8dbe0" stroke-width="0.9"/>
<path d="M17.5 419.5l1.2-6.5M104.5 419.5l1.2-6.5" stroke="#4a5260" stroke-width="0.6"/>
<text x="23.6" y="417.8" font-size="5" fill="#d8dbe0" textLength="13.6" lengthAdjust="spacingAndGlyphs">Model</text>
<path d="M41 422l2.5-12.6h47.5l-2.5 12.6z" fill="#343b47"/>
<text x="47" y="417.8" font-size="5" font-weight="bold" fill="#eceef1" textLength="36.8" lengthAdjust="spacingAndGlyphs">PislikMimar.com</text>
<path d="M97 413v5.6M94.2 415.8h5.6" stroke="#e0e3e7" stroke-width="0.8"/>
<rect x="592.3" y="411.7" width="187.7" height="9.7" fill="#313844"/>
<g fill="#262c35">
<rect x="609.2" y="411.7" width="0.9" height="9.7"/><rect x="633.5" y="411.7" width="0.9" height="9.7"/><rect x="648.8" y="411.7" width="0.9" height="9.7"/>
<rect x="676" y="411.7" width="0.9" height="9.7"/><rect x="709.5" y="411.7" width="0.9" height="9.7"/><rect x="727" y="411.7" width="0.9" height="9.7"/>
<rect x="737.5" y="411.7" width="0.9" height="9.7"/><rect x="748" y="411.7" width="0.9" height="9.7"/><rect x="758.5" y="411.7" width="0.9" height="9.7"/><rect x="769.3" y="411.7" width="0.9" height="9.7"/>
</g>
<rect x="592.3" y="411.7" width="16.9" height="9.7" fill="#434b58"/><text x="593.3" y="418.3" font-size="4.6" font-weight="bold" fill="#d8dbe0" textLength="14.4" lengthAdjust="spacingAndGlyphs">PAPER</text>
<rect x="610.3" y="412" width="8.2" height="9" fill="#4a86c4"/>
<path d="M612.3 414v5h4.5" stroke="#e6e8eb" stroke-width="0.7" fill="none"/>
<rect x="653" y="412" width="8.5" height="9" fill="#4a86c4"/>
<rect x="662.6" y="412" width="8.4" height="9" fill="#4a86c4"/>
<g stroke="#d0d4d9" stroke-width="0.65" fill="none">
<path d="M625 414.5a2.3 2.3 0 1 0 0.8 1.8"/><path d="M623.5 416.5l2-1"/>
<path d="M639.5 413.5v6.5M638 417l1.5-1.5"/>
<path d="M655 419.5l5-5M655 419.5h5"/>
<rect x="664.3" y="413.8" width="5" height="5.4"/>
<rect x="680.5" y="413.5" width="6" height="6" stroke-dasharray="1 0.6"/>
<path d="M691.5 420l2.5-6.5 2.5 6.5M693 417.5h3.5"/>
<path d="M699.5 420l2.5-6.5 2.5 6.5"/>
<path d="M729 416.5h6M732 413.5v6"/>
<circle cx="741.5" cy="415" r="1.4"/><path d="M739.5 420l2-3 2 3M743.5 414.5h2v2h-2"/>
<rect x="760.5" y="414" width="6" height="4.8"/><path d="M761 418.5l2-2 1.5 1 2-2"/>
<path d="M771 413.5h6.5M771 416.5h6.5M771 419.5h6.5"/>
</g>
<circle cx="714.6" cy="416.5" r="2.4" fill="none" stroke="#e0e3e7" stroke-width="1.3" stroke-dasharray="0.9 0.6"/>
<circle cx="714.6" cy="416.5" r="1.6" fill="#e0e3e7"/><circle cx="714.6" cy="416.5" r="0.8" fill="#3a4250"/>
<path d="M721.5 416.5h1.5" stroke="#d0d4d9" stroke-width="0.6"/>
<g fill="#aab0b8"><path d="M630 416h2.4l-1.2 1.4z"/><path d="M645 416h2.4l-1.2 1.4z"/><path d="M672.5 416h2.4l-1.2 1.4z"/></g>
<path d="M750 414h5l-2 2h-3zM750 417h2.5v3h-2.5z" fill="#5aa060"/><path d="M753 417l2.5 0v3z" fill="#e8c040"/><path d="M754 413.5l1.5 1.5" stroke="#4a8ad0" stroke-width="0.8"/>
<!-- TASKBAR -->
<g fill="#f4f4f4"><path d="M6.2 428.3l3-0.5v2.6h-3z"/><path d="M9.7 427.7l3.1-0.5v3.2h-3.1z"/><path d="M6.2 430.9h3v2.6l-3-0.4z"/><path d="M9.7 430.9h3.1v3.2l-3.1-0.5z"/></g>
<rect x="19.2" y="423" width="116.8" height="16" fill="#f2f2f2"/>
<circle cx="28.5" cy="429.5" r="2.2" fill="none" stroke="#333" stroke-width="0.7"/>
<path d="M27 431.2l-2.3 2.3" stroke="#333" stroke-width="0.8"/>
<text x="36" y="433.5" font-size="6" fill="#333" textLength="9" lengthAdjust="spacingAndGlyphs">Ara</text>
<g fill="#f2c4d2">
<circle cx="127.5" cy="431" r="2"/><circle cx="121.5" cy="430.5" r="1.6"/><circle cx="117" cy="429.5" r="1.2"/><circle cx="112" cy="432" r="1"/><circle cx="110" cy="436" r="1.3"/><circle cx="113" cy="437.5" r="1"/><circle cx="124" cy="433" r="1.2"/>
</g>
<path d="M107 431.5c5 0 9-2 14-1.5M121 430.5c3 0 6 1 8 0.8h5.5" stroke="#6a3040" stroke-width="0.5" fill="none"/>
<circle cx="148" cy="430.5" r="5" fill="#2a9a48"/>
<path d="M148 430.5L143.2 428.5A5 5 0 0 1 152.5 428z" fill="#e04030"/>
<path d="M148 430.5L152.5 428A5 5 0 0 1 149 435.4z" fill="#f5c518"/>
<circle cx="148" cy="430.5" r="2.2" fill="#fff"/><circle cx="148" cy="430.5" r="1.7" fill="#3a80e0"/>
<rect x="157.7" y="422.3" width="19.3" height="16.7" fill="#3a3a3a"/>
<rect x="162.8" y="425.8" width="9" height="9" rx="1.2" fill="#cc1440"/>
<text x="165.3" y="431.8" font-size="5" font-weight="bold" fill="#fff" textLength="3.6" lengthAdjust="spacingAndGlyphs">A</text>
<rect x="165" y="433" width="4.5" height="0.6" fill="#fff"/>
<g fill="#8ab2da"><rect x="139" y="438" width="16" height="1"/><rect x="158" y="438" width="19" height="1"/><rect x="179" y="438" width="16" height="1"/></g>
<ellipse cx="187" cy="431" rx="4.8" ry="3.8" fill="#d8dcd8"/>
<path d="M184 431c1-2 4-2.5 6-1M185 433c2 0 4-0.5 5-2" stroke="#8a9a90" stroke-width="0.6" fill="none"/>
<path d="M189.5 428l2.5-2.5" stroke="#70a050" stroke-width="1"/>
<path d="M715.5 431l1.8-1.8 1.8 1.8" stroke="#ddd" stroke-width="0.6" fill="none"/>
<path d="M723.2 429.2h1.3l1.8-1.6v6l-1.8-1.6h-1.3z" fill="#ddd"/>
<path d="M727.5 429c0.8 0.8 0.8 2.5 0 3.3" stroke="#ddd" stroke-width="0.5" fill="none"/>
<text x="739" y="429.5" font-size="4.8" fill="#e8e8e8" textLength="11.5" lengthAdjust="spacingAndGlyphs">20:48</text>
<text x="735" y="435.8" font-size="4.8" fill="#e8e8e8" textLength="20.6" lengthAdjust="spacingAndGlyphs">6.04.2026</text>
<path d="M763.5 427.5h6v4.8h-3.5l-2.5 2z" fill="none" stroke="#ddd" stroke-width="0.6"/>

</svg>
</body></html>
